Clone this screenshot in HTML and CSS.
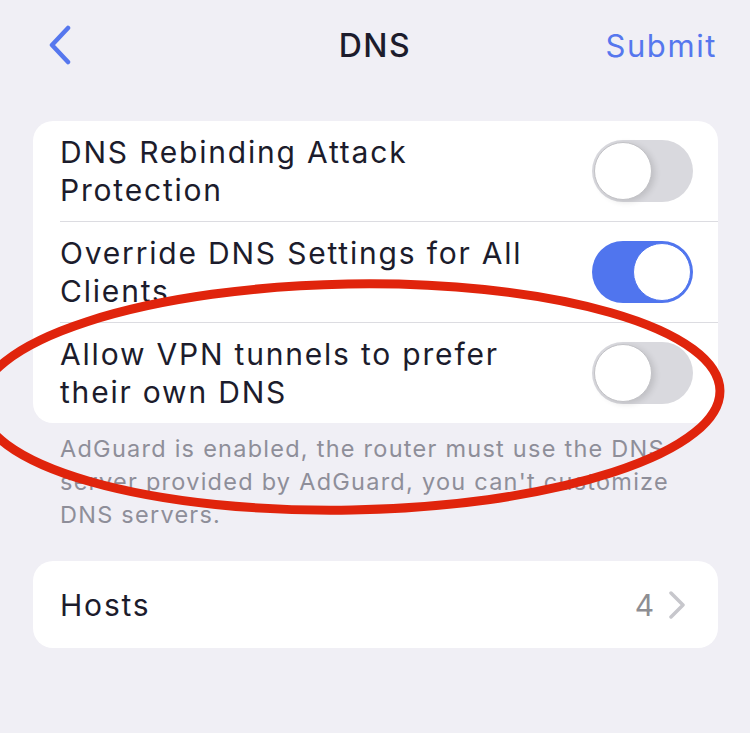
FILE: index.html
```html
<!DOCTYPE html>
<html lang="en">
<head>
    <meta charset="UTF-8">
    <meta name="viewport" content="width=device-width, initial-scale=1.0">
    <title>DNS</title>
    <link rel="stylesheet" href="styles.css">
</head>
<body>
    <div class="screen">
        <div class="navbar">
            <div class="nav-left">
                <svg class="back" width="24" height="40" viewBox="0 0 24 40">
                    <polyline points="20,3 4,20 20,37" fill="none" stroke="#5677ee" stroke-width="4.5" stroke-linecap="round" stroke-linejoin="round"/>
                </svg>
            </div>
            <div class="nav-title">DNS</div>
            <div class="nav-right">Submit</div>
        </div>

        <div class="group">
            <div class="row">
                <div class="row-label">DNS Rebinding Attack<br>Protection</div>
                <div class="switch"><div class="knob"></div></div>
            </div>
            <div class="row">
                <div class="row-label">Override DNS Settings for All<br>Clients</div>
                <div class="switch on"><div class="knob"></div></div>
            </div>
            <div class="row">
                <div class="row-label">Allow VPN tunnels to prefer<br>their own DNS</div>
                <div class="switch"><div class="knob"></div></div>
            </div>
        </div>
        <p class="footnote">AdGuard is enabled, the router must use the DNS server provided by AdGuard, you can't customize DNS servers.</p>

        <div class="group">
            <div class="row single">
                <div class="row-label">Hosts</div>
                <div class="row-value">
                    <span>4</span>
                    <svg width="16" height="28" viewBox="0 0 16 28">
                        <polyline points="2,2 14,14 2,26" fill="none" stroke="#c7c7cc" stroke-width="3.5" stroke-linecap="round" stroke-linejoin="round"/>
                    </svg>
                </div>
            </div>
        </div>

        <!-- red marker annotation drawn over the screenshot -->
        <svg class="scribble" width="750" height="733" viewBox="0 0 750 733">
            <ellipse cx="350" cy="397" rx="370" ry="113" transform="rotate(-1 350 397)" fill="none" stroke="#e0240c" stroke-width="9"/>
        </svg>
    </div>
</body>
</html>
```

FILE: styles.css
```css
body {
    margin: 0;
    background: #f0eff5;
    font-family: Inter, "Noto Sans", sans-serif;
    color: #1c1c2c;
}
.screen {
    position: relative;
    width: 750px;
    height: 733px;
    overflow: hidden;
}
.navbar {
    display: grid;
    grid-template-columns: 1fr auto 1fr;
    align-items: center;
    height: 90px;
    padding: 0 33px;
}
.back {
    display: block;
    margin-left: 15px;
}
.nav-title {
    font-size: 32px;
    font-weight: 500;
    letter-spacing: 1.5px;
}
.nav-right {
    text-align: right;
    font-size: 31px;
    letter-spacing: 1.6px;
    color: #5677ee;
}
.group {
    background: #fff;
    border-radius: 20px;
    margin: 31px 32px 0 33px;
    overflow: hidden;
}
.row {
    display: flex;
    align-items: center;
    justify-content: space-between;
    height: 100px;
    padding: 0 25px 0 27px;
    position: relative;
}
.row + .row {
    border-top: 1px solid transparent;
}
.row + .row::before {
    content: "";
    position: absolute;
    top: -1px;
    left: 27px;
    right: 0;
    height: 1px;
    background: #dcdce1;
}
.row-label {
    font-size: 30px;
    line-height: 38px;
    letter-spacing: 1.8px;
}
.row.single {
    height: 87px;
    padding-right: 33px;
}
.row-value {
    display: flex;
    align-items: center;
    gap: 13px;
    font-size: 30px;
    letter-spacing: 1.8px;
    color: #8e8e93;
}
.row-value svg {
    display: block;
}
.switch {
    width: 101px;
    height: 62px;
    border-radius: 31px;
    background: #d9d9de;
    position: relative;
    flex-shrink: 0;
}
.switch .knob {
    position: absolute;
    top: 2px;
    left: 2px;
    width: 58px;
    height: 58px;
    border-radius: 50%;
    background: #fff;
    box-sizing: border-box;
    border: 1.5px solid #c2c2c6;
    box-shadow: 3px 2px 6px rgba(0, 0, 0, 0.12);
}
.switch.on {
    background: #5075ee;
}
.switch.on .knob {
    left: auto;
    right: 2px;
    border-color: #5075ee;
    box-shadow: none;
}
.footnote {
    margin: 9px 60px 0 60px;
    font-size: 23.5px;
    line-height: 33px;
    letter-spacing: 1.25px;
    color: #8e8e99;
}
.footnote + .group {
    margin-top: 30px;
}
.scribble {
    position: absolute;
    left: 0;
    top: 0;
    pointer-events: none;
}
```
